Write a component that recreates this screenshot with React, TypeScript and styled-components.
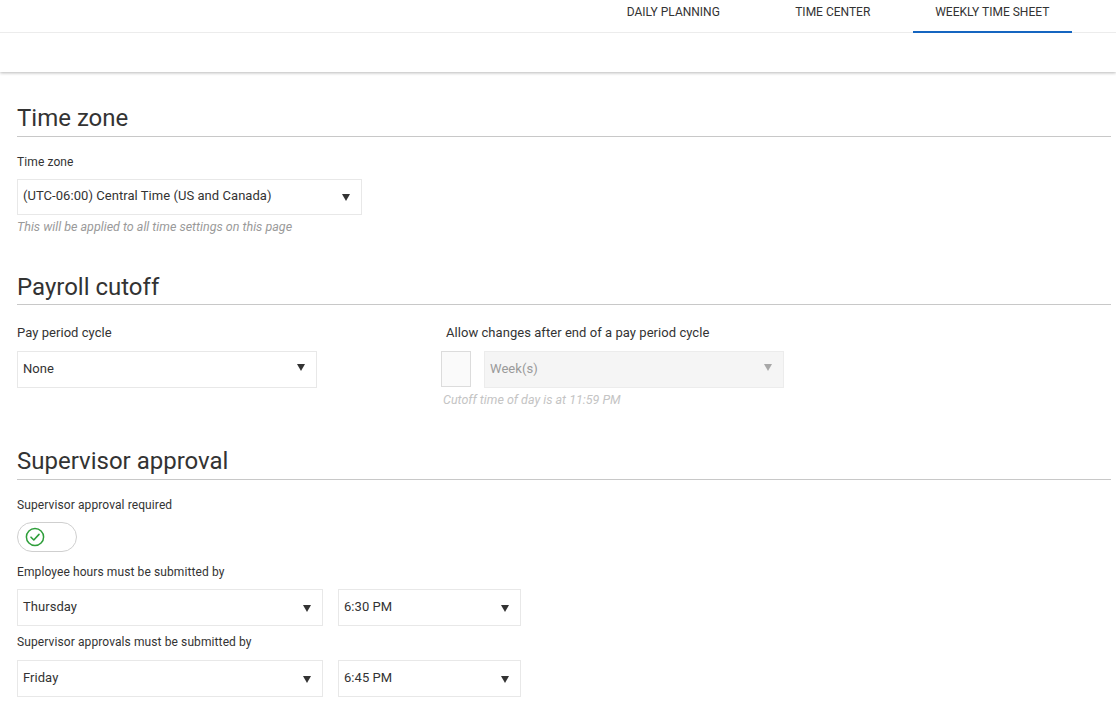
import React from "react";
import styled, { createGlobalStyle } from "styled-components";

const Global = createGlobalStyle`
  html, body { margin: 0; padding: 0; background: #fff; }
  body { font-family: Roboto, "Liberation Sans", Arial, sans-serif; color: #333; }
  * { box-sizing: border-box; }
`;

const Header = styled.header`
  height: 72px;
  background: #fff;
  box-shadow: 0 1px 3px rgba(0, 0, 0, 0.28);
`;

const TabBar = styled.nav`
  display: flex;
  justify-content: flex-end;
  height: 33px;
  padding-right: 44px;
  border-bottom: 1px solid #ececec;
`;

const Tab = styled.div<{ $active?: boolean }>`
  width: 159.5px;
  text-align: center;
  font-size: 12px;
  line-height: 25px;
  color: #333;
  text-transform: uppercase;
  border-bottom: 2px solid ${(p) => (p.$active ? "#1565c0" : "transparent")};
  height: 33px;
`;

const Main = styled.main`
  padding: 0 5px 20px 17px;
`;

const Section = styled.section<{ $top: number }>`
  margin-top: ${(p) => p.$top}px;
`;

const Heading = styled.h2<{ $pad?: number }>`
  margin: 0;
  font-size: 24px;
  line-height: 28px;
  font-weight: 400;
  color: #333;
  padding-bottom: ${(p) => p.$pad ?? 4}px;
  border-bottom: 1px solid #c8c8c8;
`;

const Label = styled.div<{ $top: number; $size?: number; $indent?: number }>`
  margin-top: ${(p) => p.$top}px;
  margin-left: ${(p) => p.$indent ?? 0}px;
  font-size: ${(p) => p.$size ?? 12}px;
  letter-spacing: ${(p) => (p.$size ? 0.05 : 0.1)}px;
  line-height: 16px;
  color: #333;
`;

const Help = styled.div<{ $light?: boolean; $indent?: number }>`
  margin-top: 4px;
  margin-left: ${(p) => p.$indent ?? 0}px;
  font-size: 12.5px;
  line-height: 16px;
  font-style: italic;
  color: ${(p) => (p.$light ? "#c4c4c4" : "#9a9a9a")};
`;

const SelectBox = styled.div<{ $w: number; $h?: number; $disabled?: boolean; $top?: number }>`
  width: ${(p) => p.$w}px;
  height: ${(p) => p.$h ?? 37}px;
  margin-top: ${(p) => p.$top ?? 0}px;
  display: flex;
  align-items: center;
  justify-content: space-between;
  padding: 0 11px 3px 5px;
  border: 1px solid ${(p) => (p.$disabled ? "#ececec" : "#e8e8e8")};
  background: ${(p) => (p.$disabled ? "#f5f5f5" : "#fff")};
  font-size: 13px;
  letter-spacing: 0.05px;
  color: ${(p) => (p.$disabled ? "#9a9a9a" : "#333")};
`;

const Arrow = styled.span<{ $disabled?: boolean; $shift?: number }>`
  width: 0;
  height: 0;
  border-left: 4.5px solid transparent;
  border-right: 4.5px solid transparent;
  border-top: 7px solid ${(p) => (p.$disabled ? "#a8a8a8" : "#333")};
  margin-top: ${(p) => p.$shift ?? 5}px;
`;

const Select = ({
  value,
  w,
  h,
  disabled,
  top,
  shift,
}: {
  value: string;
  w: number;
  h?: number;
  disabled?: boolean;
  top?: number;
  shift?: number;
}) => (
  <SelectBox $w={w} $h={h} $disabled={disabled} $top={top}>
    <span>{value}</span>
    <Arrow $disabled={disabled} $shift={shift} />
  </SelectBox>
);

const Columns = styled.div`
  display: flex;
`;

const Column = styled.div<{ $w: number }>`
  width: ${(p) => p.$w}px;
  display: flex;
  flex-direction: column;
`;

const Row = styled.div<{ $gap: number; $top: number }>`
  display: flex;
  gap: ${(p) => p.$gap}px;
  margin-top: ${(p) => p.$top}px;
`;

const CheckBox = styled.div`
  width: 30px;
  height: 36px;
  border: 1px solid #dcdcdc;
  background: #fafafa;
`;

const Toggle = styled.div`
  margin-top: 9px;
  width: 60px;
  height: 30px;
  border: 1px solid #cfcfcf;
  border-radius: 15px;
  display: flex;
  align-items: center;
  padding-left: 7px;
`;

const CheckIcon = () => (
  <svg width="20" height="20" viewBox="0 0 20 20">
    <circle cx="10" cy="10" r="8.6" fill="none" stroke="#2e9e3a" strokeWidth="1.5" />
    <path d="M6 10.2 L8.8 13 L14 7.4" fill="none" stroke="#2e9e3a" strokeWidth="1.6" strokeLinecap="round" strokeLinejoin="round" />
  </svg>
);

const SelectWrapBox = styled.div<{ $top: number }>`
  margin-top: ${(p) => p.$top}px;
`;

export default function App() {
  return (
    <>
      <Global />
      <Header>
        <TabBar>
          <Tab>Daily Planning</Tab>
          <Tab>Time Center</Tab>
          <Tab $active>Weekly Time Sheet</Tab>
        </TabBar>
      </Header>
      <Main>
        <Section $top={32}>
          <Heading>Time zone</Heading>
          <Label $top={17}>Time zone</Label>
          <SelectWrapBox $top={9}>
            <Select value="(UTC-06:00) Central Time (US and Canada)" w={345} h={36} shift={4} />
          </SelectWrapBox>
          <Help>This will be applied to all time settings on this page</Help>
        </Section>
        <Section $top={38}>
          <Heading $pad={3}>Payroll cutoff</Heading>
          <Columns>
            <Column $w={424}>
              <Label $top={20} $size={13}>Pay period cycle</Label>
              <Select value="None" w={300} top={10} shift={-2} />
            </Column>
            <Column $w={400}>
              <Label $top={20} $size={13} $indent={5}>
                Allow changes after end of a pay period cycle
              </Label>
              <Row $gap={13} $top={10}>
                <CheckBox />
                <Select value="Week(s)" w={300} disabled shift={-2} />
              </Row>
              <Help $light $indent={2}>Cutoff time of day is at 11:59 PM</Help>
            </Column>
          </Columns>
        </Section>
        <Section $top={39}>
          <Heading>Supervisor approval</Heading>
          <Label $top={17}>Supervisor approval required</Label>
          <Toggle>
            <CheckIcon />
          </Toggle>
          <Label $top={12}>Employee hours must be submitted by</Label>
          <Row $gap={15} $top={9}>
            <Select value="Thursday" w={306} />
            <Select value="6:30 PM" w={183} />
          </Row>
          <Label $top={8}>Supervisor approvals must be submitted by</Label>
          <Row $gap={15} $top={10}>
            <Select value="Friday" w={306} />
            <Select value="6:45 PM" w={183} />
          </Row>
        </Section>
      </Main>
    </>
  );
}
